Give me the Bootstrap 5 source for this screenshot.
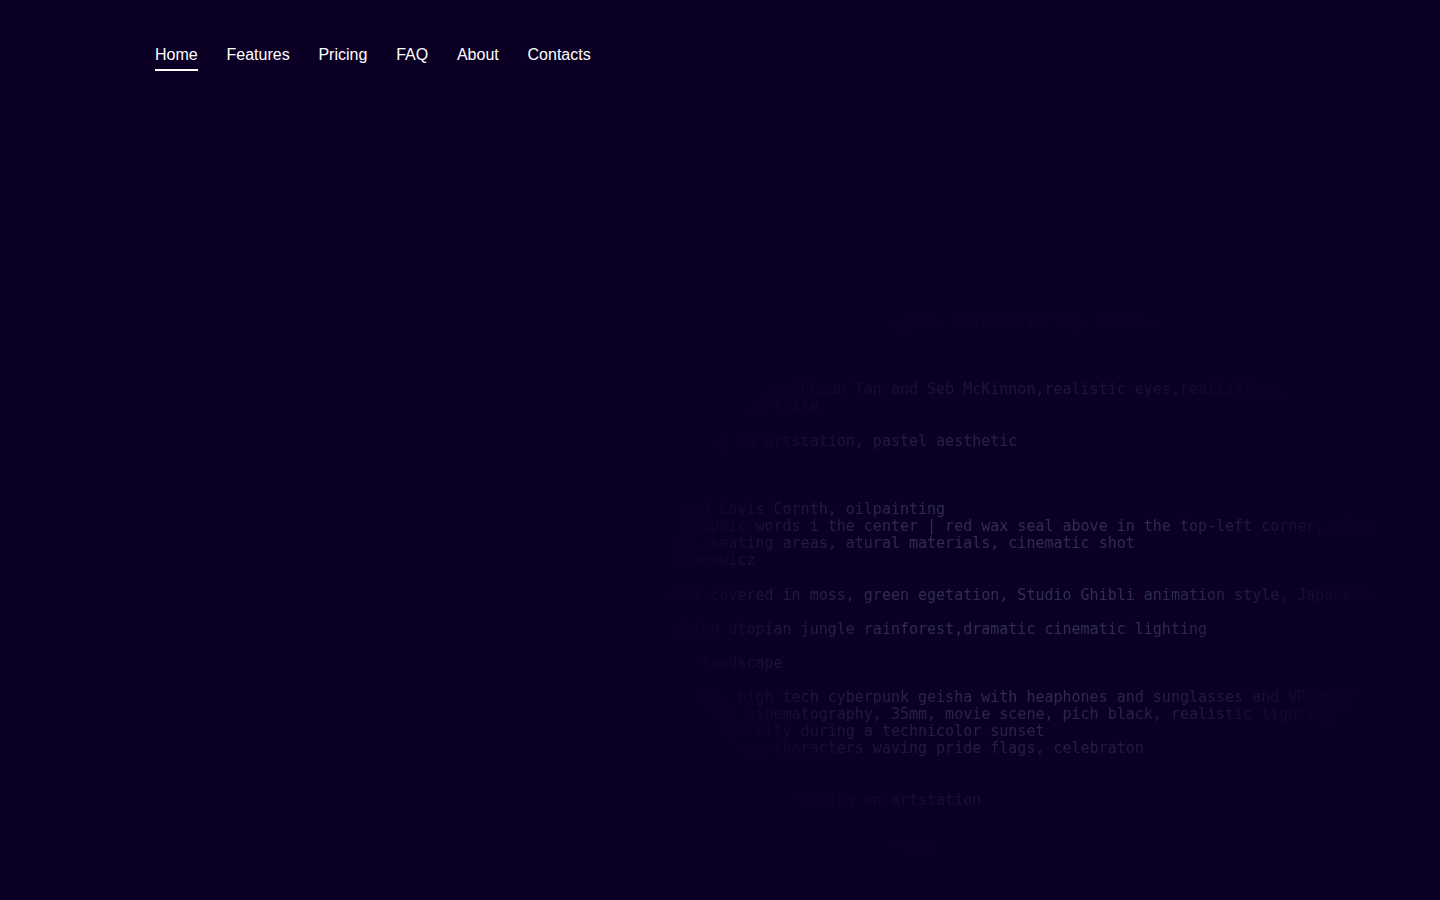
<!DOCTYPE html>
<html lang="en">
<head>
    <meta charset="UTF-8">
    <meta name="viewport" content="width=device-width, initial-scale=1.0">
    <title>Home</title>
    <link href="https://cdn.jsdelivr.net/npm/bootstrap@5.3.2/dist/css/bootstrap.min.css" rel="stylesheet">
    <style>
        body { background-color: #0b0024; height: 900px; overflow: hidden; }
        .top-menu { margin: 43px 0 0 155px; gap: 28.8px; font-family: "Liberation Sans", Arial, sans-serif; }
        .top-menu .nav-link { padding: 0 0 2px; border-bottom: 2px solid transparent; color: #fff; font-size: 16px; line-height: 24px; }
        .top-menu .nav-link.active { border-bottom-color: #fff; }
        .prompt-log {
            margin: 242px 0 0 620px;
            height: 560px;
            overflow: hidden;
            color: #302e58;
            font-family: "DejaVu Sans Mono", "Liberation Mono", monospace;
            font-size: 15px;
            line-height: 17.1px;
            -webkit-mask-image: radial-gradient(ellipse 358px 283px at 405px 272px, #000 0%, rgba(0,0,0,.95) 38%, rgba(0,0,0,.55) 66%, rgba(0,0,0,.14) 88%, transparent 100%);
            mask-image: radial-gradient(ellipse 358px 283px at 405px 272px, #000 0%, rgba(0,0,0,.95) 38%, rgba(0,0,0,.55) 66%, rgba(0,0,0,.14) 88%, transparent 100%);
        }
    </style>
</head>

<body>
    <ul class="nav top-menu">
        <li class="nav-item"><a class="nav-link active" href="#">Home</a></li>
        <li class="nav-item"><a class="nav-link" href="#">Features</a></li>
        <li class="nav-item"><a class="nav-link" href="#">Pricing</a></li>
        <li class="nav-item"><a class="nav-link" href="#">FAQ</a></li>
        <li class="nav-item"><a class="nav-link" href="#">About</a></li>
        <li class="nav-item"><a class="nav-link" href="#">Contacts</a></li>
    </ul>

    <pre class="prompt-log">                             lights, volumetric fog, realistic



           Mullins,Shhaun Tan and Seb McKinnon,realistic eyes,realistic hair
              in liife

    trending on artstation, pastel aesthetic



       and Lovis Cornth, oilpainting
       graphic words i the center | red wax seal above in the top-left corner, cinematic
  plants, seating areas, atural materials, cinematic shot
      Stanowicz

    walls covered in moss, green egetation, Studio Ghibli animation style, Japanese garden

      alien utopian jungle rainforest,dramatic cinematic lighting

         landscape

    smiling, high tech cyberpunk geisha with heaphones and sunglasses and VR goggles
     dramatic cinematography, 35mm, movie scene, pich black, realistic lighting, film
       Diamond City during a technicolor sunset
        smiling, characters waving pride flags, celebraton


                  trending on artstation


                             highly</pre>

    <script src="https://cdn.jsdelivr.net/npm/bootstrap@5.3.2/dist/js/bootstrap.bundle.min.js"></script>
</body>
</html>
